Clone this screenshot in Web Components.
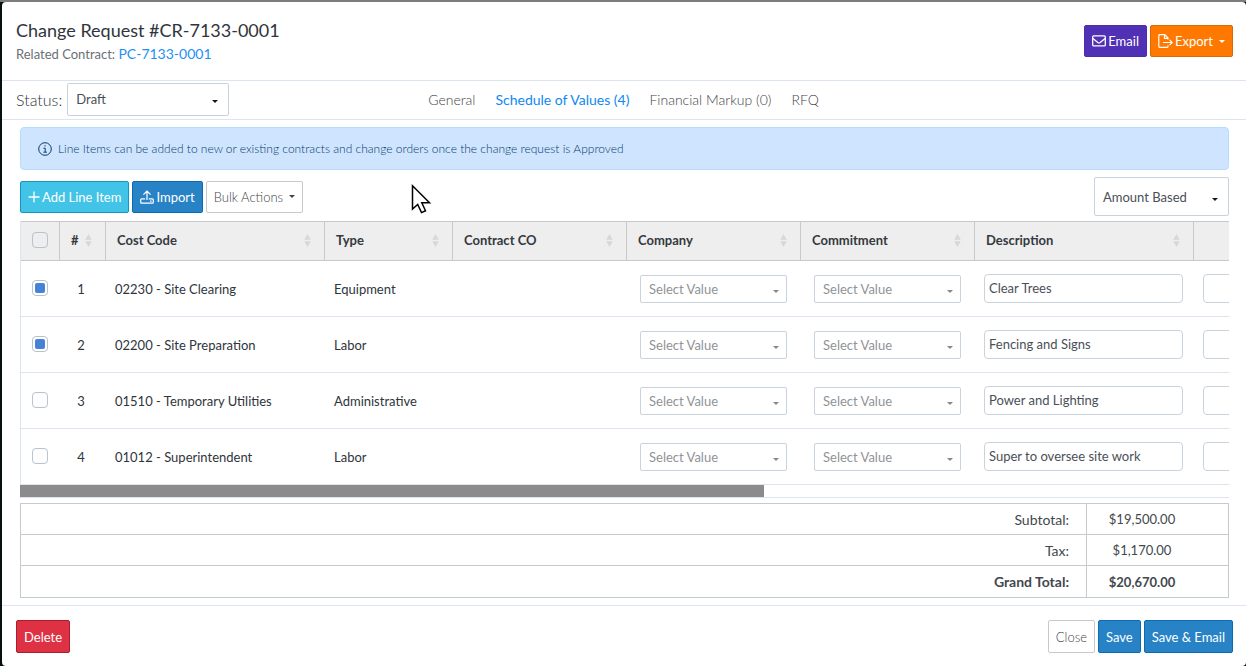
<!DOCTYPE html>
<html lang="en">
<head>
  <meta charset="UTF-8">
  <meta name="viewport" content="width=device-width, initial-scale=1.0">
  <title>Change Request #CR-7133-0001</title>
  <style>
    :root {
      --line: #dbe4ef;
      --grey-line: #c8c9ca;
      --field-line: #c8d3dd;
      --blue: #2783c6;
      --link: #1e90f5;
      --text: #2f353b;
    }
    body {
      margin: 0;
      padding: 2px 0 0 2px;
      background: linear-gradient(#7c7c7e 2px, #06100c 2px);
      font-family: Lato, "Liberation Sans", sans-serif;
      font-size: 13px;
      color: var(--text);
    }
  </style>
</head>
<body>
  <change-request></change-request>

  <script>
    const icons = {
      mail: `<svg width="14" height="12" viewBox="0 0 14 12" fill="none" stroke="currentColor" stroke-width="1.3"><rect x=".7" y=".9" width="12.6" height="10" rx="1"/><path d="M1 3.4 5.8 7.4q1.2.9 2.4 0L13 3.4"/></svg>`,
      export: `<svg width="15" height="14" viewBox="0 0 15 14" fill="none" stroke="currentColor" stroke-width="1.2"><path d="M10 5.6V4L6.8.7H1.6Q.8.7.8 1.5v11q0 .8.8.8h7.6q.8 0 .8-.8v-1.2M6.5.8v3.5H10M5 8.5h9M11.6 5.9l2.6 2.6-2.6 2.6"/></svg>`,
      plus: `<svg width="12" height="12" viewBox="0 0 12 12" stroke="currentColor" stroke-width="1.3"><path d="M6 .5v11M.5 6h11"/></svg>`,
      upload: `<svg width="14" height="14" viewBox="0 0 14 14" fill="none" stroke="currentColor" stroke-width="1.2"><path d="M7 10V1.2M3.4 4.6 7 1.2l3.6 3.4M5.2 8.8H1.6q-.9 0-.9.9v2.6q0 .9.9.9h10.8q.9 0 .9-.9V9.7q0-.9-.9-.9H8.8M10 11.2h1.6"/></svg>`,
      info: `<svg width="14" height="14" viewBox="0 0 14 14" fill="none" stroke="currentColor"><circle cx="7" cy="7" r="6.3"/><path d="M5.5 6.2H7.2V10M5.4 10.2h3.4M6.4 3.9h1.3"/></svg>`,
      sort: `<svg width="7" height="13" viewBox="0 0 7 13" fill="#d3dad3"><path d="M3.5 0 6.8 5.7H.2zM.2 7.3h6.6L3.5 13z"/></svg>`,
    };

    class AppButton extends HTMLElement {
      constructor() {
        super();
        this.attachShadow({ mode: "open" });
      }

      connectedCallback() {
        const icon = icons[this.getAttribute("icon")] || "";
        const caret = this.hasAttribute("caret") ? `<i class="caret"></i>` : "";
        this.shadowRoot.innerHTML = `
          <style>
            :host { display: block; }
            button {
              display: flex;
              align-items: center;
              gap: 2px;
              height: 32px;
              padding: 0 7px;
              border: 1px solid var(--grey-line);
              border-radius: 2px;
              background: #fff;
              color: #3f4348;
              font: 300 13px Lato, sans-serif;
              white-space: nowrap;
              cursor: pointer;
            }
            :host([size="lg"]) button { height: 33px; }
            :host([variant]) button { color: #fff; font-weight: 400; }
            :host([variant="purple"]) button { background: #5030b5; border-color: #4c2db0; }
            :host([variant="orange"]) button { background: #ff7800; border-color: #d96a0c; }
            :host([variant="cyan"]) button { background: #42c3e8; border-color: #1897bd; }
            :host([variant="blue"]) button { background: var(--blue); border-color: #0a6cb4; }
            :host([variant="red"]) button { background: #df3144; border-color: #a81f30; }
            .caret {
              margin-left: 4px;
              border: 3px solid transparent;
              border-top-color: currentColor;
              border-bottom: 0;
            }
          </style>
          <button type="button">${icon}<span><slot></slot></span>${caret}</button>
        `;
      }
    }

    class SelectField extends HTMLElement {
      constructor() {
        super();
        this.attachShadow({ mode: "open" });
      }

      connectedCallback() {
        this.shadowRoot.innerHTML = `
          <style>
            :host {
              display: block;
              position: relative;
              width: 147px;
              height: 28px;
              color: #909397;
            }
            :host([tone="dark"]) { color: #4a4f57; }
            select {
              appearance: none;
              display: block;
              box-sizing: border-box;
              width: 100%;
              height: 100%;
              padding: 0 24px 0 8px;
              border: 1px solid var(--field-line);
              border-radius: 2px;
              background: #fff;
              color: inherit;
              font: 13px Lato, sans-serif;
            }
            i {
              position: absolute;
              right: 8px;
              top: calc(50% + 1px);
              border: 3px solid transparent;
              border-top-color: #85888c;
              border-bottom: 0;
              pointer-events: none;
            }
            :host([tone="dark"]) i { right: 11px; border-top-color: #15181c; }
          </style>
          <select aria-label="${this.getAttribute("label")}">
            <option>${this.getAttribute("value")}</option>
          </select>
          <i></i>
        `;
      }
    }

    class InfoAlert extends HTMLElement {
      constructor() {
        super();
        this.attachShadow({ mode: "open" });
      }

      connectedCallback() {
        this.shadowRoot.innerHTML = `
          <style>
            :host {
              display: flex;
              align-items: center;
              gap: 6px;
              box-sizing: border-box;
              height: 43px;
              padding: 0 17px;
              border: 1px solid #b8dcfb;
              border-radius: 4px;
              background: #cfe5ff;
              color: #06386b;
              font-size: 12px;
              font-weight: 300;
            }
          </style>
          ${icons.info}<span><slot></slot></span>
        `;
      }
    }

    class LineItems extends HTMLElement {
      constructor() {
        super();
        this.attachShadow({ mode: "open" });
        this.items = [
          { code: "02230 - Site Clearing", type: "Equipment", description: "Clear Trees", checked: true },
          { code: "02200 - Site Preparation", type: "Labor", description: "Fencing and Signs", checked: true },
          { code: "01510 - Temporary Utilities", type: "Administrative", description: "Power and Lighting" },
          { code: "01012 - Superintendent", type: "Labor", description: "Super to oversee site work" },
        ];
      }

      connectedCallback() {
        this.render();
      }

      row(item, index) {
        const n = index + 1;
        return `
          <tr>
            <td class="check"><input type="checkbox" aria-label="Select line ${n}" ${item.checked ? "checked" : ""}></td>
            <td class="num">${n}</td>
            <td>${item.code}</td>
            <td>${item.type}</td>
            <td></td>
            <td class="pick"><select-field label="Company ${n}" value="Select Value"></select-field></td>
            <td class="pick"><select-field label="Commitment ${n}" value="Select Value"></select-field></td>
            <td><input type="text" aria-label="Description ${n}" value="${item.description}"></td>
            <td><input type="text" aria-label="Quantity ${n}"></td>
          </tr>
        `;
      }

      render() {
        const headings = ["#", "Cost Code", "Type", "Contract CO", "Company", "Commitment", "Description"];
        this.shadowRoot.innerHTML = `
          <style>
            :host { display: block; }
            .scroller { overflow: hidden; }
            table {
              width: 1967px;
              table-layout: fixed;
              border-collapse: separate;
              border-spacing: 0;
              border-left: 1px solid var(--line);
            }
            th {
              box-sizing: border-box;
              height: 40px;
              padding: 0 13px 2px 11px;
              border: solid var(--grey-line);
              border-width: 1px 1px 1px 0;
              background: #eee;
              font-weight: 700;
              color: #35393e;
            }
            th div {
              display: flex;
              align-items: center;
              justify-content: space-between;
            }
            td {
              box-sizing: border-box;
              height: 56px;
              padding: 0 9px;
              border-bottom: 1px solid var(--line);
            }
            .check { padding: 0 11px 2px; }
            .check input { display: block; }
            .num { text-align: center; padding: 0 4px 0 0; }
            .pick { padding: 0 13px; }
            input[type="checkbox"] {
              appearance: none;
              box-sizing: border-box;
              width: 16px;
              height: 16px;
              margin: 0;
              padding: 2px;
              border: 1px solid #b9c2cd;
              border-radius: 4px;
            }
            input:checked::before {
              content: "";
              display: block;
              height: 100%;
              border-radius: 2px;
              background: #4782d8;
            }
            input[type="text"] {
              display: block;
              box-sizing: border-box;
              width: 199px;
              height: 29px;
              padding: 0 4px 1px;
              border: 1px solid var(--field-line);
              border-radius: 4px;
              color: #4a4f57;
              font: 13px Lato, sans-serif;
            }
            .track {
              height: 12px;
              border-bottom: 1px solid var(--line);
            }
            .thumb {
              width: 61.5%;
              height: 100%;
              background: #8b8b8b;
            }
          </style>
          <div class="scroller">
            <table>
              <colgroup>
                <col style="width: 39px"><col style="width: 46px"><col style="width: 219px">
                <col style="width: 128px"><col span="3" style="width: 174px">
                <col style="width: 219px"><col>
              </colgroup>
              <thead>
                <tr>
                  <th class="check"><input type="checkbox" aria-label="Select all lines"></th>
                  ${headings.map((text) => `<th scope="col"><div>${text}${icons.sort}</div></th>`).join("")}
                  <th></th>
                </tr>
              </thead>
              <tbody>${this.items.map((item, i) => this.row(item, i)).join("")}</tbody>
            </table>
          </div>
          <div class="track"><div class="thumb"></div></div>
        `;
      }
    }

    class TotalsTable extends HTMLElement {
      constructor() {
        super();
        this.attachShadow({ mode: "open" });
      }

      connectedCallback() {
        this.shadowRoot.innerHTML = `
          <style>
            :host { display: block; }
            table {
              width: 100%;
              border-collapse: collapse;
              color: #43474c;
            }
            th, td {
              box-sizing: border-box;
              height: 31px;
              padding: 0;
              border: 1px solid var(--grey-line);
              font-weight: 400;
            }
            th { padding-right: 17px; text-align: right; font-size: 14px; }
            td { width: 142px; padding-right: 31px; text-align: center; font-size: 13px; }
            .grand > * { height: 32px; font-weight: 700; }
          </style>
          <table>
            <tr><th scope="row">Subtotal:</th><td>$19,500.00</td></tr>
            <tr><th scope="row">Tax:</th><td>$1,170.00</td></tr>
            <tr class="grand"><th scope="row">Grand Total:</th><td>$20,670.00</td></tr>
          </table>
        `;
      }
    }

    class ChangeRequest extends HTMLElement {
      constructor() {
        super();
        this.attachShadow({ mode: "open" });
      }

      connectedCallback() {
        this.shadowRoot.innerHTML = `
          <style>
            :host {
              display: block;
              min-height: calc(100vh - 2px);
              border-radius: 4px;
              background: #fff;
            }
            header, nav, footer, .tools, .group {
              display: flex;
              align-items: center;
            }
            header {
              justify-content: space-between;
              box-sizing: border-box;
              height: 79px;
              padding: 0 13px 0 14px;
              border-bottom: 1px solid var(--line);
            }
            h1 {
              margin: 0;
              padding-top: 2px;
              font-size: 18px;
              line-height: 24px;
              font-weight: 400;
            }
            p {
              margin: 0;
              font-size: 13px;
              line-height: 24px;
              color: #6b7076;
            }
            p a { font-size: 14px; color: var(--link); text-decoration: none; }
            .group { gap: 3px; }
            nav {
              box-sizing: border-box;
              height: 39px;
              padding: 0 0 2px 14px;
              border-bottom: 1px solid var(--line);
              font-size: 16px;
              font-weight: 300;
            }
            .status { width: 162px; height: 33px; margin-left: 5px; }
            .tabs { display: flex; gap: 20px; margin-left: 199px; font-size: 14px; }
            .tabs a { color: #3f4348; text-decoration: none; }
            .tabs a[aria-current] { color: #0f88f2; font-weight: 400; }
            main { padding: 7px 17px 7px 18px; }
            .tools {
              justify-content: space-between;
              margin: 7px 0 5px;
            }
            .basis { width: 135px; height: 39px; }
            totals-table { margin-top: 5px; }
            footer {
              justify-content: space-between;
              padding: 14px 13px 13px 14px;
              border-top: 1px solid var(--line);
            }
            .cursor {
              position: absolute;
              left: 411px;
              top: 184px;
              pointer-events: none;
            }
          </style>
          <header>
            <div>
              <h1>Change Request #CR-7133-0001</h1>
              <p>Related Contract: <a href="#contract">PC-7133-0001</a></p>
            </div>
            <div class="group">
              <app-button variant="purple" icon="mail">Email</app-button>
              <app-button variant="orange" icon="export" caret>Export</app-button>
            </div>
          </header>
          <nav>
            <span>Status:</span>
            <select-field class="status" tone="dark" label="Status" value="Draft"></select-field>
            <div class="tabs">
              <a href="#general">General</a>
              <a href="#values" aria-current="page">Schedule of Values (4)</a>
              <a href="#markup">Financial Markup (0)</a>
              <a href="#rfq">RFQ</a>
            </div>
          </nav>
          <main>
            <info-alert>Line Items can be added to new or existing contracts and change orders once the change request is Approved</info-alert>
            <div class="tools">
              <div class="group">
                <app-button variant="cyan" icon="plus">Add Line Item</app-button>
                <app-button variant="blue" icon="upload">Import</app-button>
                <app-button caret>Bulk Actions</app-button>
              </div>
              <select-field class="basis" tone="dark" label="Calculation basis" value="Amount Based"></select-field>
            </div>
            <line-items></line-items>
            <totals-table></totals-table>
          </main>
          <footer>
            <app-button size="lg" variant="red">Delete</app-button>
            <div class="group">
              <app-button size="lg">Close</app-button>
              <app-button size="lg" variant="blue">Save</app-button>
              <app-button size="lg" variant="blue">Save &amp; Email</app-button>
            </div>
          </footer>
          <svg class="cursor" width="21" height="31" viewBox="0 0 21 31">
            <path d="M1.5 1.8v23.2l5.2-4.6 3.8 8.2 4-1.8-3.7-8h7.7z" fill="#fff" stroke="#000" stroke-width="1.5"/>
          </svg>
        `;
      }
    }

    customElements.define("app-button", AppButton);
    customElements.define("select-field", SelectField);
    customElements.define("info-alert", InfoAlert);
    customElements.define("line-items", LineItems);
    customElements.define("totals-table", TotalsTable);
    customElements.define("change-request", ChangeRequest);
  </script>
</body>
</html>
